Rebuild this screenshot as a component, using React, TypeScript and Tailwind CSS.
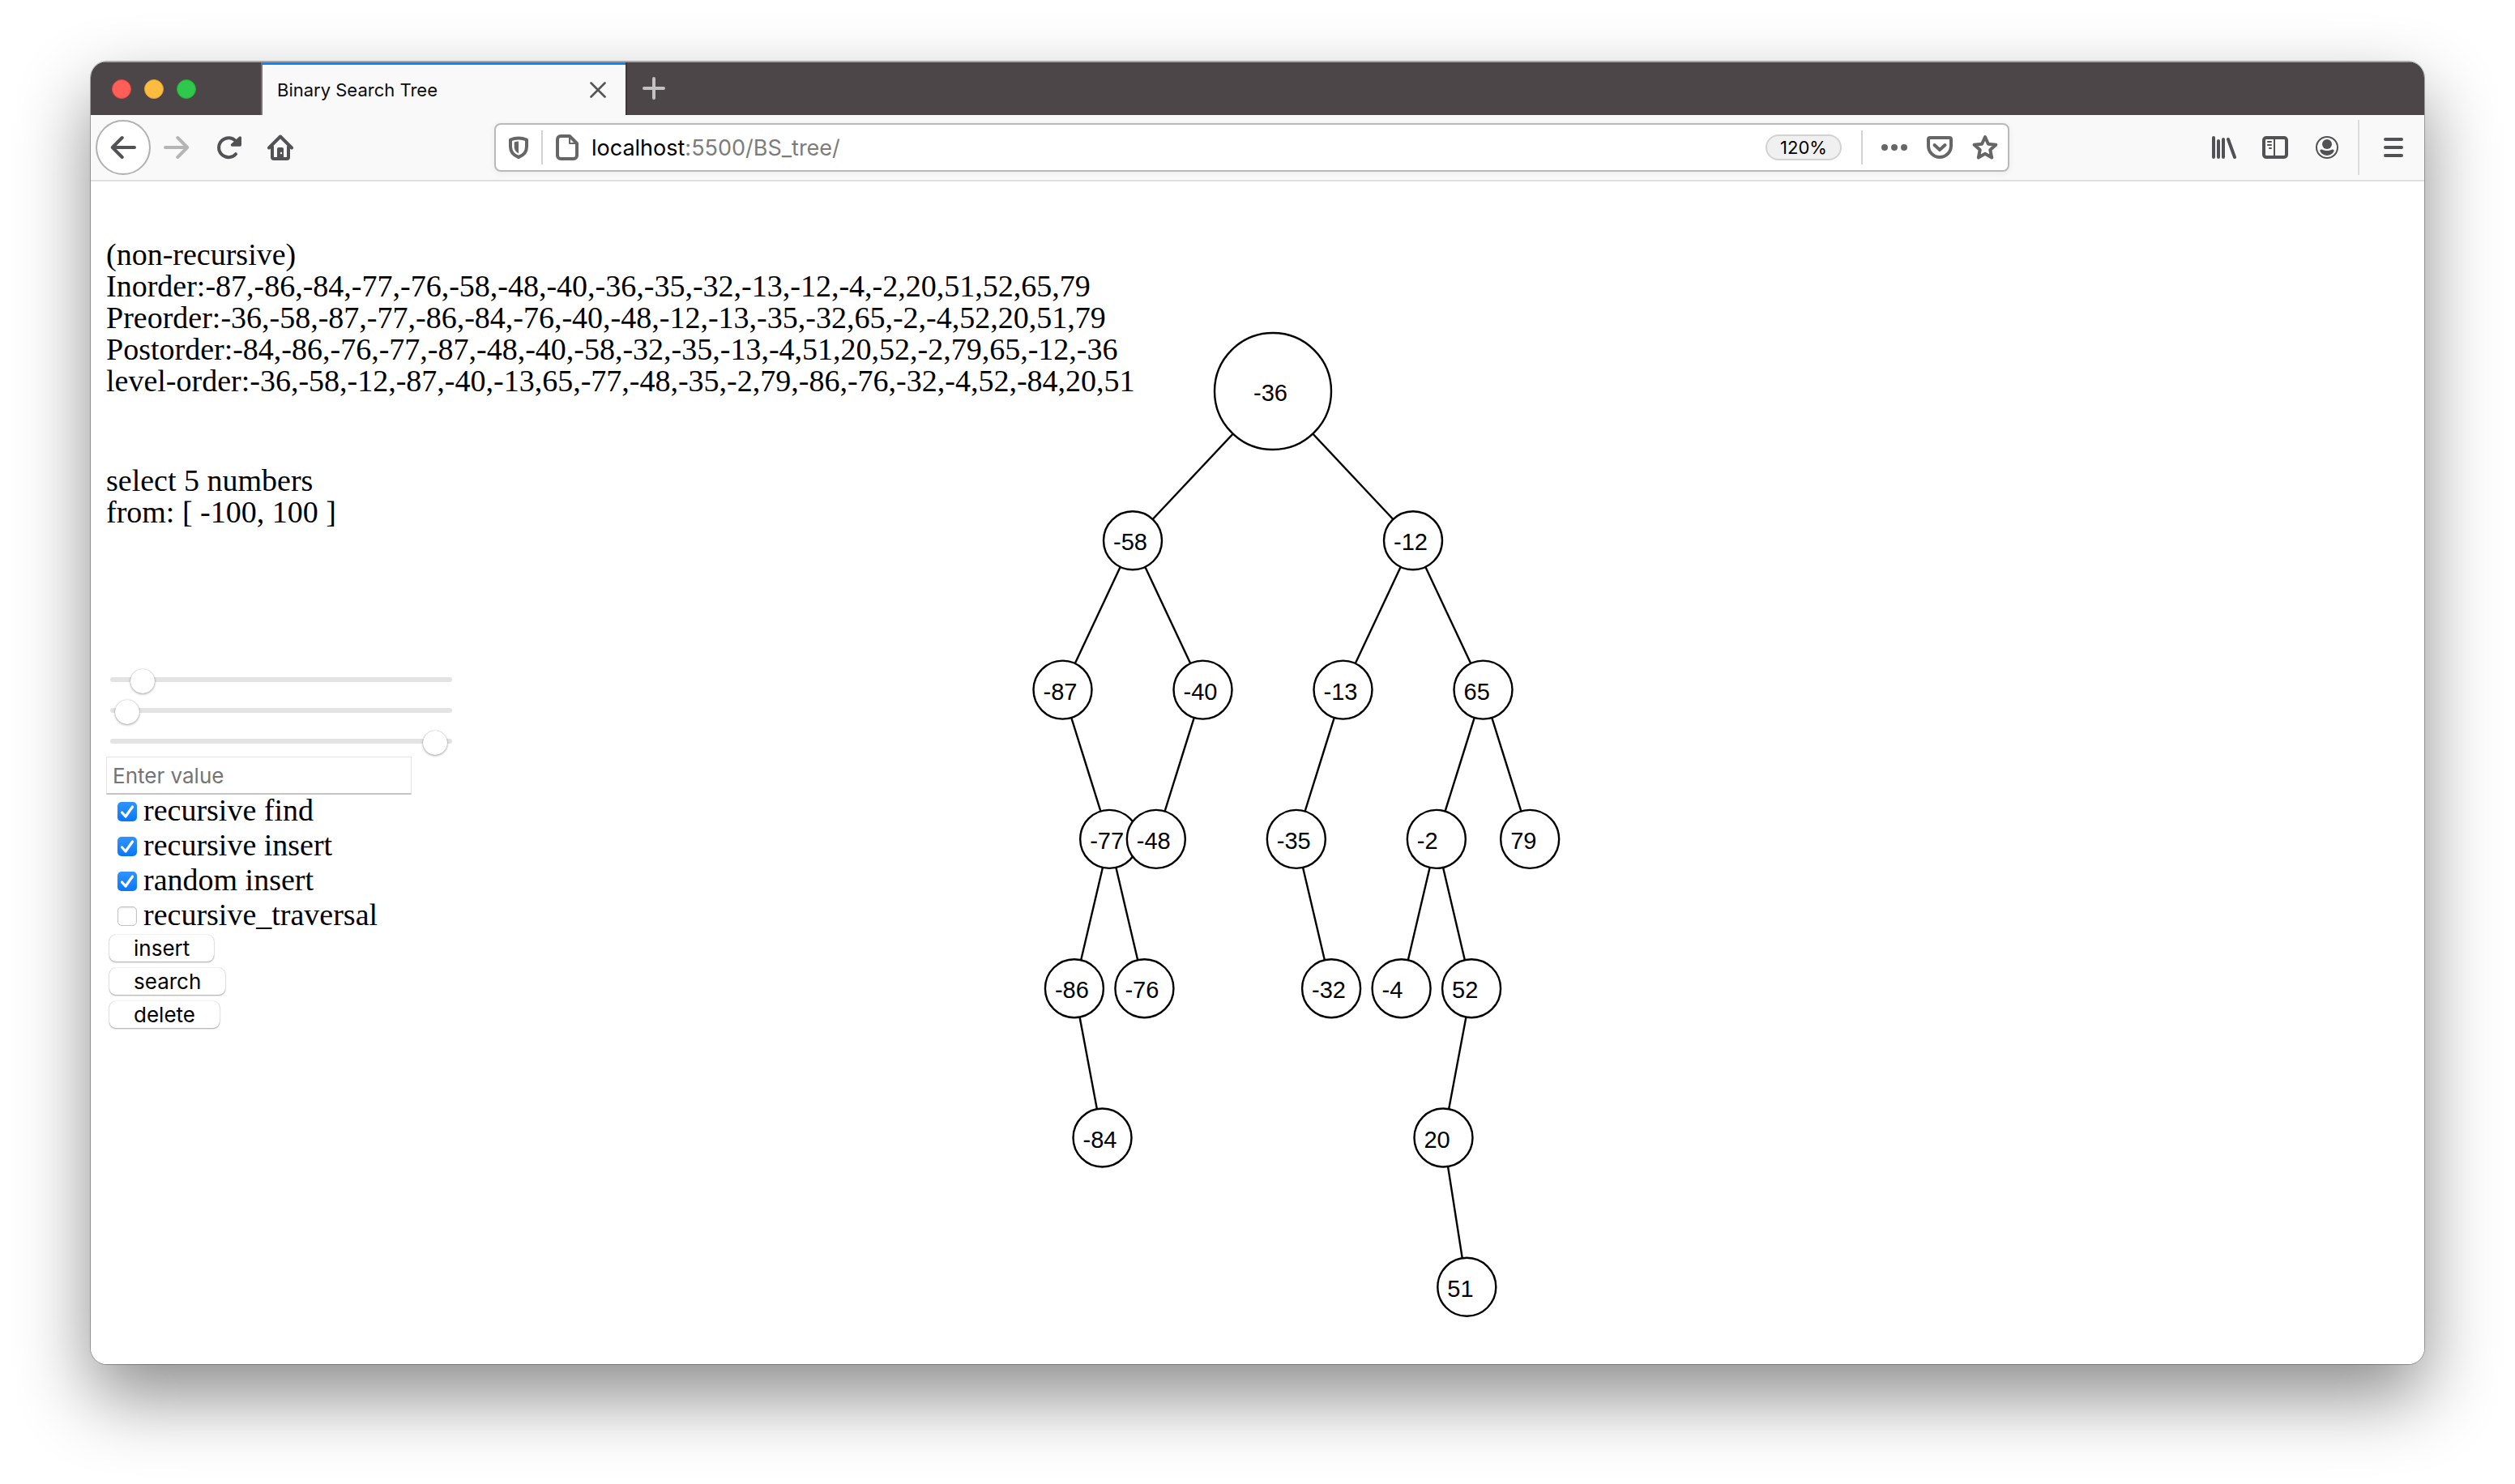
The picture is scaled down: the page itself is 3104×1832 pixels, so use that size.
import type { ReactNode } from "react";

type TreeNode = { value: number; left?: TreeNode; right?: TreeNode };
type Placed = { value: number; x: number; y: number; r: number };
type Edge = { x1: number; y1: number; x2: number; y2: number };

const INSERTION_ORDER = [
  -36, -58, -12, -87, -40, -13, 65, -77, -48, -35, -2, 79, -86, -76, -32, -4, 52, -84, 20, 51,
];

const TRAVERSALS = [
  "Inorder:-87,-86,-84,-77,-76,-58,-48,-40,-36,-35,-32,-13,-12,-4,-2,20,51,52,65,79",
  "Preorder:-36,-58,-87,-77,-86,-84,-76,-40,-48,-12,-13,-35,-32,65,-2,-4,52,20,51,79",
  "Postorder:-84,-86,-76,-77,-87,-48,-40,-58,-32,-35,-13,-4,51,20,52,-2,79,65,-12,-36",
  "level-order:-36,-58,-12,-87,-40,-13,65,-77,-48,-35,-2,79,-86,-76,-32,-4,52,-84,20,51",
];

const SLIDERS = [
  { label: "numbers to insert", value: 6.4 },
  { label: "range start", value: 1.5 },
  { label: "range end", value: 98.5 },
];

const OPTIONS = [
  { id: "rec-find", label: "recursive find", checked: true },
  { id: "rec-insert", label: "recursive insert", checked: true },
  { id: "rand-insert", label: "random insert", checked: true },
  { id: "rec-traversal", label: "recursive_traversal", checked: false },
];

function insert(node: TreeNode | undefined, value: number): TreeNode {
  if (!node) return { value };
  return value < node.value
    ? { ...node, left: insert(node.left, value) }
    : { ...node, right: insert(node.right, value) };
}

// Each level halves, thirds, quarters... the horizontal spread of the first one.
function place(node: TreeNode, x: number, y: number, depth: number, nodes: Placed[], edges: Edge[]) {
  nodes.push({ value: node.value, x, y, r: depth === 0 ? 72 : 36 });
  const dx = 173 / (depth + 1);
  const childY = y + 184.3;
  if (node.left) {
    edges.push({ x1: x, y1: y, x2: x - dx, y2: childY });
    place(node.left, x - dx, childY, depth + 1, nodes, edges);
  }
  if (node.right) {
    edges.push({ x1: x, y1: y, x2: x + dx, y2: childY });
    place(node.right, x + dx, childY, depth + 1, nodes, edges);
  }
}

function TreeDrawing() {
  const root = INSERTION_ORDER.reduce<TreeNode | undefined>((t, v) => insert(t, v), undefined)!;
  const nodes: Placed[] = [];
  const edges: Edge[] = [];
  place(root, 360, 74, 0, nodes, edges);
  nodes.sort((a, b) => a.y - b.y || a.x - b.x);
  return (
    <svg
      width="720"
      height="1220"
      viewBox="0 0 720 1220"
      role="img"
      aria-label="Binary search tree"
      className="pointer-events-none font-['Liberation_Sans',Arial,sans-serif]"
    >
      <g stroke="#000" strokeWidth="2.4">
        {edges.map((e, i) => (
          <line key={i} {...e} />
        ))}
      </g>
      {nodes.map((n) => (
        <g key={n.value}>
          <circle cx={n.x} cy={n.y} r={n.r} fill="#fff" stroke="#000" strokeWidth="2.4" />
          <text x={n.x - 24} y={n.y + 12} fontSize="29">
            {n.value}
          </text>
        </g>
      ))}
    </svg>
  );
}

function Icon({ w = 32, h = 32, children }: { w?: number; h?: number; children: ReactNode }) {
  return (
    <svg
      width={w}
      height={h}
      viewBox={`0 0 ${w} ${h}`}
      fill="none"
      stroke="currentColor"
      strokeWidth="4"
      strokeLinecap="round"
      strokeLinejoin="round"
      aria-hidden="true"
      className="shrink-0"
    >
      {children}
    </svg>
  );
}

function ToolButton({ label, children }: { label: string; children: ReactNode }) {
  return (
    <button type="button" aria-label={label} className="flex h-16 w-16 items-center justify-center">
      {children}
    </button>
  );
}

function TitleBar() {
  return (
    <header className="flex h-[66px] border-t border-[#a5a2a3] bg-[#4d4648]">
      <div className="flex w-[210px] items-center gap-4 pl-[26px]">
        <button type="button" aria-label="Close window" className="h-6 w-6 rounded-full border border-[#e2463f] bg-[#ff5f57]" />
        <button type="button" aria-label="Minimize window" className="h-6 w-6 rounded-full border border-[#dfa032] bg-[#febc40]" />
        <button type="button" aria-label="Zoom window" className="h-6 w-6 rounded-full border border-[#1fab36] bg-[#2fc84c]" />
      </div>
      <div className="flex w-[450px] items-center justify-between border-l-2 border-t-[3px] border-l-[#777173] border-t-[#0a84ff] bg-[#f9f9fa] pl-[18px] pr-6 font-[Inter,sans-serif]">
        <span className="text-[22px] text-[#0c0c0d]">Binary Search Tree</span>
        <button type="button" aria-label="Close tab" className="text-[#555]">
          <Icon w={20} h={20}>
            <path d="M1.5 1.5L18.5 18.5M18.5 1.5L1.5 18.5" strokeWidth="2.6" />
          </Icon>
        </button>
      </div>
      <button type="button" aria-label="New tab" className="flex w-[68px] items-center justify-center border-l-2 border-[#3c3638] pb-0.5 text-[#c4c1c2]">
        <Icon w={28} h={28}>
          <path d="M14 2V26M2 14H26" />
        </Icon>
      </button>
    </header>
  );
}

function AddressBar() {
  return (
    <div className="mx-[232px] flex h-[60px] flex-1 items-center rounded-lg border-2 border-[#b9b9ba] bg-white px-3 font-[Inter,sans-serif] text-[#666] shadow-[0_2px_8px_rgba(0,0,0,0.06)]">
      <button type="button" aria-label="Tracking protection" className="ml-1">
        <Icon w={24} h={28}>
          <path d="M2 4.5Q12 .5 22 4.5V13C22 19.500 17.500 24 12 26C6.500 24 2 19.500 2 13Z" />
          <path d="M12 6.500Q9 6.600 6.700 7.500V13C6.700 17 9 20 12 21.500Z" fill="currentColor" stroke="none" />
        </Icon>
      </button>
      <div className="mx-4 h-[42px] w-0.5 bg-[#d2d2d2]" />
      <button type="button" aria-label="Site information">
        <Icon w={28} h={32}>
          <path d="M6 2H17L26 11V26a4 4 0 0 1-4 4H6a4 4 0 0 1-4-4V6a4 4 0 0 1 4-4Z" />
          <path d="M17 3V11H25" strokeWidth="2" />
        </Icon>
      </button>
      <div role="textbox" aria-label="Address" tabIndex={0} className="ml-4 flex-1 pt-0.5 text-[27px] text-[#7c7c7c]">
        <span className="text-black">localhost</span>:5500/BS_tree/
      </div>
      <button type="button" aria-label="Zoom level" className="flex h-8 w-[94px] items-center justify-center rounded-full border-2 border-[#d2d2d2] bg-[#f0f0f0] pt-px text-[22px] text-black">
        120%
      </button>
      <div className="ml-6 mr-[23px] h-[42px] w-0.5 bg-[#d2d2d2]" />
      <div className="flex items-center gap-6">
        <button type="button" aria-label="Page actions">
          <Icon>
            <path d="M4 16h0M16 16h0M28 16h0" strokeWidth="8" />
          </Icon>
        </button>
        <button type="button" aria-label="Save to Pocket">
          <Icon w={32} h={28}>
            <path d="M4 2H28a2 2 0 0 1 2 2V12a14 14 0 0 1-28 0V4a2 2 0 0 1 2-2Z" />
            <path d="M9.500 11L16 17L22.500 11" />
          </Icon>
        </button>
        <button type="button" aria-label="Bookmark this page">
          <Icon>
            <path d="M16 3L19.900 11.700L29.300 12.700L22.300 19L24.200 28.600L16 23.800L7.800 28.600L9.700 19L2.700 12.700L12.100 11.700Z" />
          </Icon>
        </button>
      </div>
    </div>
  );
}

function NavBar() {
  return (
    <nav className="flex h-[82px] items-center border-b-2 border-[#dfdfe0] bg-[#f9f9fa] px-1.5 text-[#525254]">
      <button type="button" aria-label="Back" className="flex h-[68px] w-[68px] items-center justify-center rounded-full border-2 border-[#b1b1b1] bg-white">
        <Icon>
          <path d="M3 16H30M14.700 4L2.800 16L14.700 28" />
        </Icon>
      </button>
      <div className="flex text-[#b5b5b6]">
        <ToolButton label="Forward">
          <Icon>
            <path d="M2 16H29M17.300 4L29.200 16L17.300 28" />
          </Icon>
        </ToolButton>
      </div>
      <ToolButton label="Reload">
        <Icon>
          <path d="M25 24.200A12 12 0 1 1 25.500 8.700" />
          <path d="M30.300 4V13H20.500Z" fill="currentColor" strokeWidth="3.400" />
        </Icon>
      </ToolButton>
      <ToolButton label="Home">
        <Icon>
          <path d="M2 16.500L16 2.500L30 16.500" />
          <path d="M6 15V28a2 2 0 0 0 2 2H24a2 2 0 0 0 2-2V15" />
          <path d="M12 28V18a2 2 0 0 1 2-2h4a2 2 0 0 1 2 2V28Z" fill="currentColor" stroke="none" />
          <circle cx="17" cy="23" r="1.200" fill="#f9f9fa" stroke="none" />
        </Icon>
      </ToolButton>
      <AddressBar />
      <ToolButton label="Library">
        <Icon>
          <path d="M4 4V28M10 8V28M16 6V28M22 6L30 28" />
        </Icon>
      </ToolButton>
      <ToolButton label="Sidebars">
        <Icon>
          <rect x="2" y="4" width="28" height="24" rx="3" />
          <path d="M15 5V27M7 9H11M7 13H11M9 17H11" strokeWidth="2" />
        </Icon>
      </ToolButton>
      <ToolButton label="Account">
        <Icon>
          <circle cx="16" cy="16" r="13" strokeWidth="2" />
          <circle cx="16" cy="12" r="6" fill="currentColor" stroke="none" />
          <path
            d="M9 18.500c-1.600 0-2 1.500-1.400 2.600C9 24 12.300 26 16 26s7-2 8.400-4.900c.6-1.100.2-2.600-1.400-2.600-1.800 0-2.600 1.600-7 1.600s-5.200-1.600-7-1.600z"
            fill="currentColor"
            stroke="none"
          />
        </Icon>
      </ToolButton>
      <div className="ml-1.5 mr-2.5 h-[68px] w-0.5 bg-[#dcdcdd]" />
      <ToolButton label="Menu">
        <Icon w={24} h={24}>
          <path d="M2 2H22M2 12H22M2 22H22" />
        </Icon>
      </ToolButton>
    </nav>
  );
}

function RangeInput({ label, value }: { label: string; value: number }) {
  return (
    <div className="flex h-[38px] items-center">
      <input
        type="range"
        min={0}
        max={100}
        step={0.1}
        defaultValue={value}
        aria-label={label}
        className="h-8 w-[422px] appearance-none bg-transparent [&::-webkit-slider-runnable-track]:h-1.5 [&::-webkit-slider-runnable-track]:rounded-full [&::-webkit-slider-runnable-track]:bg-[#e3e3e3] [&::-webkit-slider-thumb]:-mt-2.5 [&::-webkit-slider-thumb]:h-[30px] [&::-webkit-slider-thumb]:w-[30px] [&::-webkit-slider-thumb]:appearance-none [&::-webkit-slider-thumb]:rounded-full [&::-webkit-slider-thumb]:bg-white [&::-webkit-slider-thumb]:shadow-[0_1px_3px_rgba(0,0,0,0.35),0_0_1px_rgba(0,0,0,0.3)]"
      />
    </div>
  );
}

function CheckOption({ id, label, checked }: { id: string; label: string; checked: boolean }) {
  return (
    <div className="flex h-[43px] items-start gap-2 pl-3.5">
      <span className="relative mt-[9px] h-6 w-6">
        <input
          id={id}
          type="checkbox"
          defaultChecked={checked}
          className="peer block h-6 w-6 appearance-none rounded-[5px] border border-[#c4c4c4] bg-white shadow-[inset_0_1px_2px_rgba(0,0,0,0.12)] checked:border-0 checked:bg-linear-to-b checked:from-[#2f93fe] checked:to-[#0577fb] checked:shadow-none"
        />
        <svg
          viewBox="0 0 24 24"
          fill="none"
          stroke="#fff"
          strokeWidth="3.200"
          strokeLinecap="round"
          strokeLinejoin="round"
          aria-hidden="true"
          className="pointer-events-none absolute inset-0 hidden h-6 w-6 peer-checked:block"
        >
          <path d="M5.500 13L10 18L18.500 6" />
        </svg>
      </span>
      <label htmlFor={id}>{label}</label>
    </div>
  );
}

function ActionButton({ children }: { children: ReactNode }) {
  return (
    <button
      type="button"
      className="flex h-[33px] items-center rounded-lg bg-white px-[30px] font-[Inter,sans-serif] text-[26px] leading-8 shadow-[0_1px_2px_rgba(0,0,0,0.35),0_0_1px_rgba(0,0,0,0.3)]"
    >
      {children}
    </button>
  );
}

export default function App() {
  return (
    <div className="flex min-h-screen flex-col bg-white px-28 pb-37 pt-19">
      <div className="flex flex-1 flex-col rounded-[20px] shadow-[0_0_0_1px_rgba(0,0,0,0.28),0_40px_90px_rgba(0,0,0,0.45)]">
        <div className="flex flex-1 flex-col overflow-hidden rounded-[20px] bg-white">
          <TitleBar />
          <NavBar />
          <main className="grid flex-1 grid-cols-1 text-black">
            <div className="col-start-1 row-start-1 justify-self-center pb-13 pl-[38px] pt-[185px]">
              <TreeDrawing />
            </div>
            <section className="pointer-events-none col-start-1 row-start-1 flex flex-col items-start pl-[19px] pt-[71px] font-['Liberation_Serif','Times_New_Roman',serif] text-[38px] leading-[39px] *:pointer-events-auto">
              <div className="whitespace-nowrap">
                <p>(non-recursive)</p>
                {TRAVERSALS.map((line) => (
                  <p key={line}>{line}</p>
                ))}
              </div>
              <div className="mt-[84px]">
                <p>select 5 numbers</p>
                <p>from: [ -100, 100 ]</p>
              </div>
              <div className="mt-[168px] pl-[5px]">
                {SLIDERS.map((s) => (
                  <RangeInput key={s.label} {...s} />
                ))}
              </div>
              <input
                type="text"
                aria-label="Value"
                placeholder="Enter value"
                className="h-[47px] w-[377px] border border-b-2 border-[#e4e4e4] border-b-[#c4c4c4] px-[7px] font-[Inter,sans-serif] text-[26px] placeholder:text-[#757575]"
              />
              <div>
                {OPTIONS.map((o) => (
                  <CheckOption key={o.id} {...o} />
                ))}
              </div>
              <div className="flex flex-col items-start gap-2 pl-1 pt-px">
                <ActionButton>insert</ActionButton>
                <ActionButton>search</ActionButton>
                <ActionButton>delete</ActionButton>
              </div>
            </section>
          </main>
        </div>
      </div>
    </div>
  );
}
